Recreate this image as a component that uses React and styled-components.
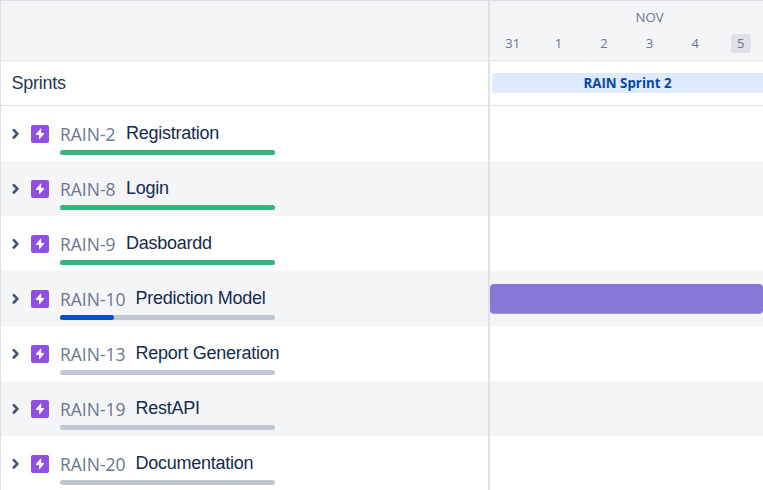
import React from "react";
import styled, { createGlobalStyle } from "styled-components";

const Global = createGlobalStyle`
  * { box-sizing: border-box; }
  body { margin: 0; background: #fff; overflow: hidden; }
`;

const uiFont = `"Open Sans", "Noto Sans", sans-serif`;

const Roadmap = styled.main`
  display: grid;
  grid-template-columns: 487px 275px;
  width: 763px;
  height: 490px;
  overflow: hidden;
  border-top: 1px solid #dfe1e6;
  border-left: 1px solid #dfe1e6;
  font-family: ${uiFont};
`;

const IssuePane = styled.section`
  min-width: 0;
`;

const TimelinePane = styled.section`
  min-width: 0;
  border-left: 2px solid #dfe1e6;
`;

const Header = styled.header`
  height: 60px;
  background: #f4f5f7;
  border-bottom: 1px solid #dfe1e6;
  color: #6b778c;
  font-size: 13px;
  line-height: 18px;
`;

const Month = styled.div`
  padding: 7px 0 0 145.5px;
  font-size: 13.2px;
`;

const Days = styled.div`
  display: grid;
  grid-template-columns: repeat(6, 45.6px);
  justify-items: center;
  padding-top: 8px;
`;

const Day = styled.span`
  min-width: 20px;
  height: 19px;
  padding: 0 2px;
  border-radius: 3px;
  text-align: center;
  line-height: 19px;
  background: ${(p) => (p.$today ? "#dfe1e6" : "transparent")};
`;

const SprintRow = styled.div`
  height: 45px;
  padding: ${(p) => p.$pad};
  border-bottom: 1px solid #dfe1e6;
`;

const SprintLabel = styled.h2`
  margin: 0;
  font: 400 18px/22px "Liberation Sans", Arial, sans-serif;
  letter-spacing: -0.25px;
  color: #253858;
`;

const SprintBar = styled.div`
  height: 20px;
  border-radius: 3px 0 0 3px;
  background: #deebff;
  color: #0747a6;
  font-size: 13.3px;
  font-weight: 700;
  line-height: 20px;
  text-align: center;
`;

const Row = styled.div`
  display: flex;
  height: 55px;
  background: ${(p) => (p.$shaded ? "#f4f5f7" : "#fff")};
`;

const Chevron = styled.svg`
  flex: none;
  width: 8px;
  height: 12px;
  margin: 22px 0 0 11px;
`;

const EpicIcon = styled.svg`
  flex: none;
  width: 18px;
  height: 18px;
  margin: 19px 11px 0 11px;
`;

const Issue = styled.div`
  width: 240px;
`;

const IssueText = styled.div`
  display: flex;
  height: 44px;
  white-space: nowrap;
`;

const IssueKey = styled.span`
  flex: 0 0 ${(p) => (p.$long ? "75.5px" : "66px")};
  padding-top: 16px;
  font-size: 17.5px;
  line-height: 24px;
  color: #6b778c;
`;

const IssueTitle = styled.span`
  padding-top: 16px;
  font: 400 18px/22px "Liberation Sans", Arial, sans-serif;
  letter-spacing: -0.25px;
  color: #172b4d;
`;

const Track = styled.div`
  width: 215px;
  height: 5px;
  border-radius: 2.5px;
  background: #c1c7d0;
`;

const Progress = styled.div`
  width: ${(p) => p.$width}px;
  height: 5px;
  border-radius: 2.5px;
  background: ${(p) => p.$color};
`;

const EpicBar = styled.div`
  width: 274px;
  height: 30px;
  margin-top: 13px;
  border-radius: 4px;
  background: #8777d9;
  border-bottom: 1px solid #a599e4;
`;

const issues = [
  { key: "RAIN-2", title: "Registration", done: 215, color: "#36b37e" },
  { key: "RAIN-8", title: "Login", done: 215, color: "#36b37e" },
  { key: "RAIN-9", title: "Dasboardd", done: 215, color: "#36b37e" },
  { key: "RAIN-10", title: "Prediction Model", done: 53.5, color: "#0052cc", bar: true },
  { key: "RAIN-13", title: "Report Generation" },
  { key: "RAIN-19", title: "RestAPI" },
  { key: "RAIN-20", title: "Documentation" },
];

const days = [31, 1, 2, 3, 4, 5];

function IssueRow({ issue, shaded }) {
  return (
    <Row $shaded={shaded}>
      <Chevron viewBox="0 0 8 12">
        <path d="M1.8 2.1 5.4 5.8 1.8 9.5" fill="none" stroke="#42526e" strokeWidth="2.6" strokeLinecap="round" strokeLinejoin="round" />
      </Chevron>
      <EpicIcon viewBox="0 0 18 18">
        <rect width="18" height="18" rx="2" fill="#904ee2" />
        <path d="M9.7 3.5 5 9.1q-.5.8.4.8h2.7v4q.1.7.6.1L13 8.9q.4-.8-.4-.8h-2.4V3.8q-.1-.6-.5-.3Z" fill="#fff" />
      </EpicIcon>
      <Issue>
        <IssueText>
          <IssueKey $long={issue.key.length > 6}>{issue.key}</IssueKey>
          <IssueTitle>{issue.title}</IssueTitle>
        </IssueText>
        <Track>{issue.done && <Progress $width={issue.done} $color={issue.color} />}</Track>
      </Issue>
    </Row>
  );
}

export default function App() {
  return (
    <>
      <Global />
      <Roadmap>
        <IssuePane>
          <Header />
          <SprintRow $pad="11px 0 0 10.5px">
            <SprintLabel>Sprints</SprintLabel>
          </SprintRow>
          {issues.map((issue, i) => (
            <IssueRow key={issue.key} issue={issue} shaded={i % 2 === 1} />
          ))}
        </IssuePane>
        <TimelinePane>
          <Header>
            <Month>NOV</Month>
            <Days>
              {days.map((d) => (
                <Day key={d} $today={d === 5}>{d}</Day>
              ))}
            </Days>
          </Header>
          <SprintRow $pad="12px 0 0 2px">
            <SprintBar>RAIN Sprint 2</SprintBar>
          </SprintRow>
          {issues.map((issue, i) => (
            <Row key={issue.key} $shaded={i % 2 === 1}>
              {issue.bar && <EpicBar />}
            </Row>
          ))}
        </TimelinePane>
      </Roadmap>
    </>
  );
}
